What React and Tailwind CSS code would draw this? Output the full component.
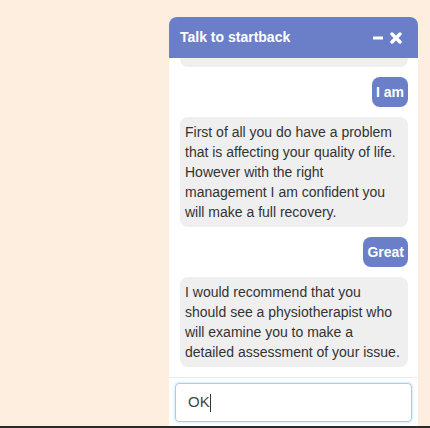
import { useState } from 'react';

const messages = [
  { id: 1, from: 'bot', text: 'Thank you. I have a few more questions if you are ready to carry on with me?' },
  { id: 2, from: 'user', text: 'I am' },
  {
    id: 3,
    from: 'bot',
    text: 'First of all you do have a problem that is affecting your quality of life. However with the right management I am confident you will make a full recovery.',
  },
  { id: 4, from: 'user', text: 'Great' },
  {
    id: 5,
    from: 'bot',
    text: 'I would recommend that you should see a physiotherapist who will examine you to make a detailed assessment of your issue.',
  },
];

const HeaderIcons = () => (
  <div className="flex items-center gap-[6px]">
    <svg width="12" height="12" viewBox="0 0 12 12">
      <path d="M1 6 H11" stroke="white" strokeWidth="3" />
    </svg>
    <svg width="12" height="12" viewBox="0 0 12 12">
      <path d="M2 2 L10 10 M10 2 L2 10" stroke="white" strokeWidth="3.4" strokeLinecap="round" />
    </svg>
  </div>
);

export default function App() {
  const [draft] = useState('OK');

  return (
    <div className="h-[428px] flex flex-col bg-[#fdeee0] font-['Liberation_Sans',Arial,sans-serif]">
      <div className="flex-1 min-h-0 flex justify-end pr-[12px] pt-[17px]">
        <div className="w-[249px] flex flex-col bg-white rounded-t-[8px] overflow-hidden">
          <div className="h-[41px] shrink-0 bg-[#6a7fc8] flex items-center justify-between pl-[11px] pr-[16px]">
            <span className="text-white font-bold text-[14px]">Talk to startback</span>
            <HeaderIcons />
          </div>

          <div className="flex-1 min-h-0 overflow-hidden flex flex-col justify-end gap-[10px] pl-[11px] pr-[10px] pb-[10px]">
            {messages.map((m) =>
              m.from === 'user' ? (
                <div
                  key={m.id}
                  className="self-end shrink-0 bg-[#6a7fc8] text-white font-bold text-[14px] leading-5 px-[4px] py-[5px] rounded-[8px]"
                >
                  {m.text}
                </div>
              ) : (
                <div
                  key={m.id}
                  className="self-start shrink-0 w-[228px] bg-[#efefef] text-[#333] text-[14px] leading-5 p-[5px] rounded-[8px]"
                >
                  {m.text}
                </div>
              )
            )}
          </div>

          <div className="shrink-0 border-t border-[#ececec] px-[6px] pt-[5px] pb-[4px]">
            <div className="h-[39px] flex items-center rounded-[4px] border border-[#9fd0f1] shadow-[0_0_3px_rgba(120,190,240,0.6)] pl-[12px] text-[15px] text-[#444]">
              <span>{draft}</span>
              <span className="w-px h-[18px] bg-[#333]" />
            </div>
          </div>
        </div>
      </div>
      <div className="h-[2px] bg-[#2a2a2a]" />
    </div>
  );
}
